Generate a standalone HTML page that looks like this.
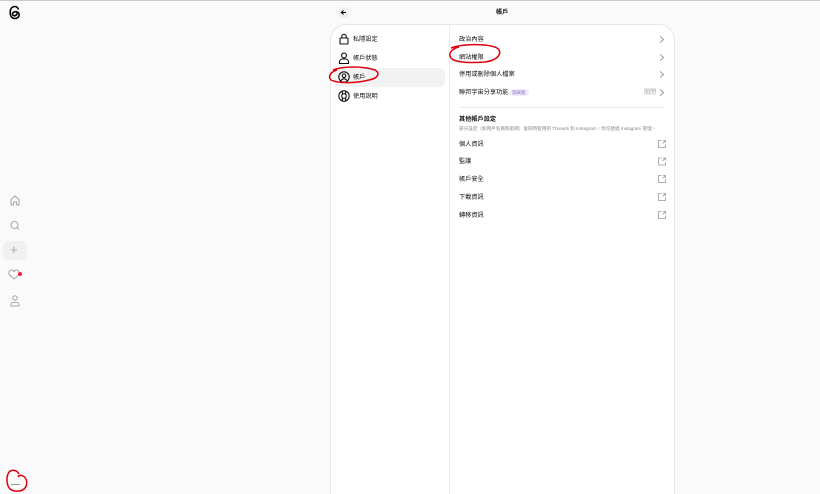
<!DOCTYPE html>
<html><head><meta charset="utf-8"><style>
*{margin:0;padding:0;box-sizing:border-box}
html,body{width:820px;height:494px;overflow:hidden}
body{background:#fafafa;font-family:"Liberation Sans","Noto Sans CJK TC",sans-serif;position:relative;color:#111}
.topline{position:absolute;left:0;top:0;width:820px;height:1px;background:#ccc}
.card{position:absolute;left:330px;top:24px;width:345px;height:470px;background:#fff;border:1px solid #e6e6e6;border-bottom:none;border-radius:16px 16px 0 0}
.div{position:absolute;left:449px;top:25px;width:1px;height:469px;background:#ececec}
.t{position:absolute;font-size:6.2px;line-height:9px;white-space:nowrap}
.sel{position:absolute;left:334px;top:68px;width:111px;height:19px;background:#f2f2f2;border-radius:6px}
.chev{position:absolute;width:5px;height:5px;border-right:1px solid #999;border-top:1px solid #999;transform:rotate(45deg)}
svg{position:absolute}
</style></head><body>
<div class="topline"></div>
<svg style="left:8px;top:5px" width="14" height="15" viewBox="0 0 14 15"><path d="M10.5 4.5C9.8 2.5 8.4 1.5 6.8 1.5 4 1.5 2.2 3.8 2.2 7.5s1.8 6 4.7 6c2.4 0 4.3-1.6 4.3-3.8 0-2-1.6-3-3.6-3-2 0-3.1 1-3.1 2.3 0 1.1 .9 1.8 2 1.8 2 0 2.8-1.6 2.8-4" fill="none" stroke="#000" stroke-width="1.6"/></svg>
<svg style="left:338px;top:7px" width="11" height="11"><circle cx="5.5" cy="5.5" r="5.5" fill="#f0f0f0"/><path d="M8 5.5H3.5M5.5 3.5L3.3 5.5 5.5 7.5" stroke="#000" stroke-width="1" fill="none"/></svg>
<div class="t" style="left:496px;top:8px;font-weight:bold">帳戶</div>
<div class="card"></div><div class="div"></div>
<div class="sel"></div>
<svg style="left:338px;top:33px" width="12" height="12" viewBox="0 0 12 12" fill="none" stroke="#111" stroke-width="1.1"><rect x="2" y="5" width="8" height="6" rx="1"/><path d="M3.8 5V3.5a2.2 2.2 0 0 1 4.4 0V5"/></svg>
<svg style="left:338px;top:52px" width="12" height="12" viewBox="0 0 12 12" fill="none" stroke="#111" stroke-width="1.1"><circle cx="6" cy="3.5" r="2.4"/><path d="M1.5 11.5v-1.5a3 3 0 0 1 3-3h3a3 3 0 0 1 3 3v1.5z"/></svg>
<svg style="left:338px;top:71px" width="12" height="12" viewBox="0 0 12 12" fill="none" stroke="#111" stroke-width="1.1"><circle cx="6" cy="6" r="5.2"/><circle cx="6" cy="4.8" r="1.8"/><path d="M2.8 9.8c.8-1.3 1.8-2 3.2-2s2.4.7 3.2 2"/></svg>
<svg style="left:338px;top:90px" width="12" height="12" viewBox="0 0 12 12" fill="none" stroke="#111" stroke-width="1.1"><circle cx="6" cy="6" r="5.2"/><circle cx="6" cy="6" r="2.3"/><path d="M4.3 1.2v3M7.7 1.2v3M4.3 7.8v3M7.7 7.8v3"/></svg>
<div class="t" style="left:353px;top:35px">私隱設定</div>
<div class="t" style="left:353px;top:54px">帳戶狀態</div>
<div class="t" style="left:353px;top:73px">帳戶</div>
<div class="t" style="left:353px;top:92px">使用說明</div>
<div class="t" style="left:459px;top:35px">政治內容</div><div class="chev" style="left:658px;top:37px"></div>
<div class="t" style="left:459px;top:53px">網站權限</div><div class="chev" style="left:658px;top:55px"></div>
<div class="t" style="left:459px;top:70px">停用或刪除個人檔案</div><div class="chev" style="left:658px;top:72px"></div>
<div class="t" style="left:459px;top:88px">聯邦宇宙分享功能</div>
<div class="t" style="left:509px;top:89px;font-size:4.5px;background:#f1ecfb;color:#8a6cc8;padding:0 3px;border-radius:4px;line-height:7px">測試版</div>
<div class="t" style="left:644px;top:88px;color:#aaa">關閉</div><div class="chev" style="left:658px;top:90px"></div>
<div style="position:absolute;left:459px;top:107px;width:205px;height:1px;background:#e8e8e8"></div>
<div class="t" style="left:459px;top:115px;font-weight:bold">其他帳戶設定</div>
<div class="t" style="left:459px;top:124px;font-size:4.6px;color:#888">部分設定（如用戶名稱和密碼）會同時套用到 Threads 和 Instagram，你可透過 Instagram 管理。</div>
<div class="t" style="left:459px;top:140px">個人資訊</div>
<div class="t" style="left:459px;top:157px">監護</div>
<div class="t" style="left:459px;top:175px">帳戶安全</div>
<div class="t" style="left:459px;top:193px">下載資訊</div>
<div class="t" style="left:459px;top:211px">轉移資訊</div>
<svg style="left:658px;top:140px" width="8" height="86" fill="none" stroke="#999" stroke-width=".8">
<g id="e"><path d="M3.5 .5H.5v7h7v-3M4.5 3.5l3-3M5 .5h2.5V3"/></g>
<use href="#e" y="17.5"/><use href="#e" y="35"/><use href="#e" y="53"/><use href="#e" y="71"/></svg>
<svg style="left:8px;top:193px" width="16" height="115" fill="none" stroke="#aaa" stroke-width="1.1">
<path d="M3 12V6.5L7 3l4 3.5V12H8.5V9h-3v3z"/>
<circle cx="6.5" cy="32" r="3.5"/><path d="M9 34.5l2 2"/>
<path d="M4 84c-3-2-4-4-2.5-6s3-1 4.5.5c1.5-1.5 3-2.5 4.5-.5s.5 4-2 6l-2.5 2z"/>
<circle cx="7" cy="105" r="2.2"/><path d="M3 113v-1.5a2 2 0 0 1 2-2h4a2 2 0 0 1 2 2V113z"/>
</svg>
<div style="position:absolute;left:3px;top:241px;width:24px;height:19px;background:#f0f0f0;border-radius:6px"></div>
<div class="t" style="left:10px;top:243px;font-size:13px;color:#aaa;line-height:14px">+</div>
<div style="position:absolute;left:18px;top:272px;width:4px;height:4px;border-radius:50%;background:#ff1a3c"></div>
<div style="position:absolute;left:11px;top:484px;width:9px;height:1px;background:#999"></div>
<svg style="left:0;top:0" width="820" height="494" fill="none" stroke="#e0000a" stroke-width="1.5">
<path d="M333 70c10-4 30-4 42 0 5 3 4 8-6 10-12 3-30 4-38 0-3-3-1-8 6-10"/>
<path d="M451 48c10-4 36-5 46 0 6 4 2 12-12 14-12 1-30 1-34-4-3-4 0-9 8-11"/>
<path d="M19 474c-3-5-9-5-11 0-2 5-1 12 2 15 4 3 12 3 15-1 3-4 2-10-2-12-2-1-4-1-5 1"/>
</svg>
</body></html>
